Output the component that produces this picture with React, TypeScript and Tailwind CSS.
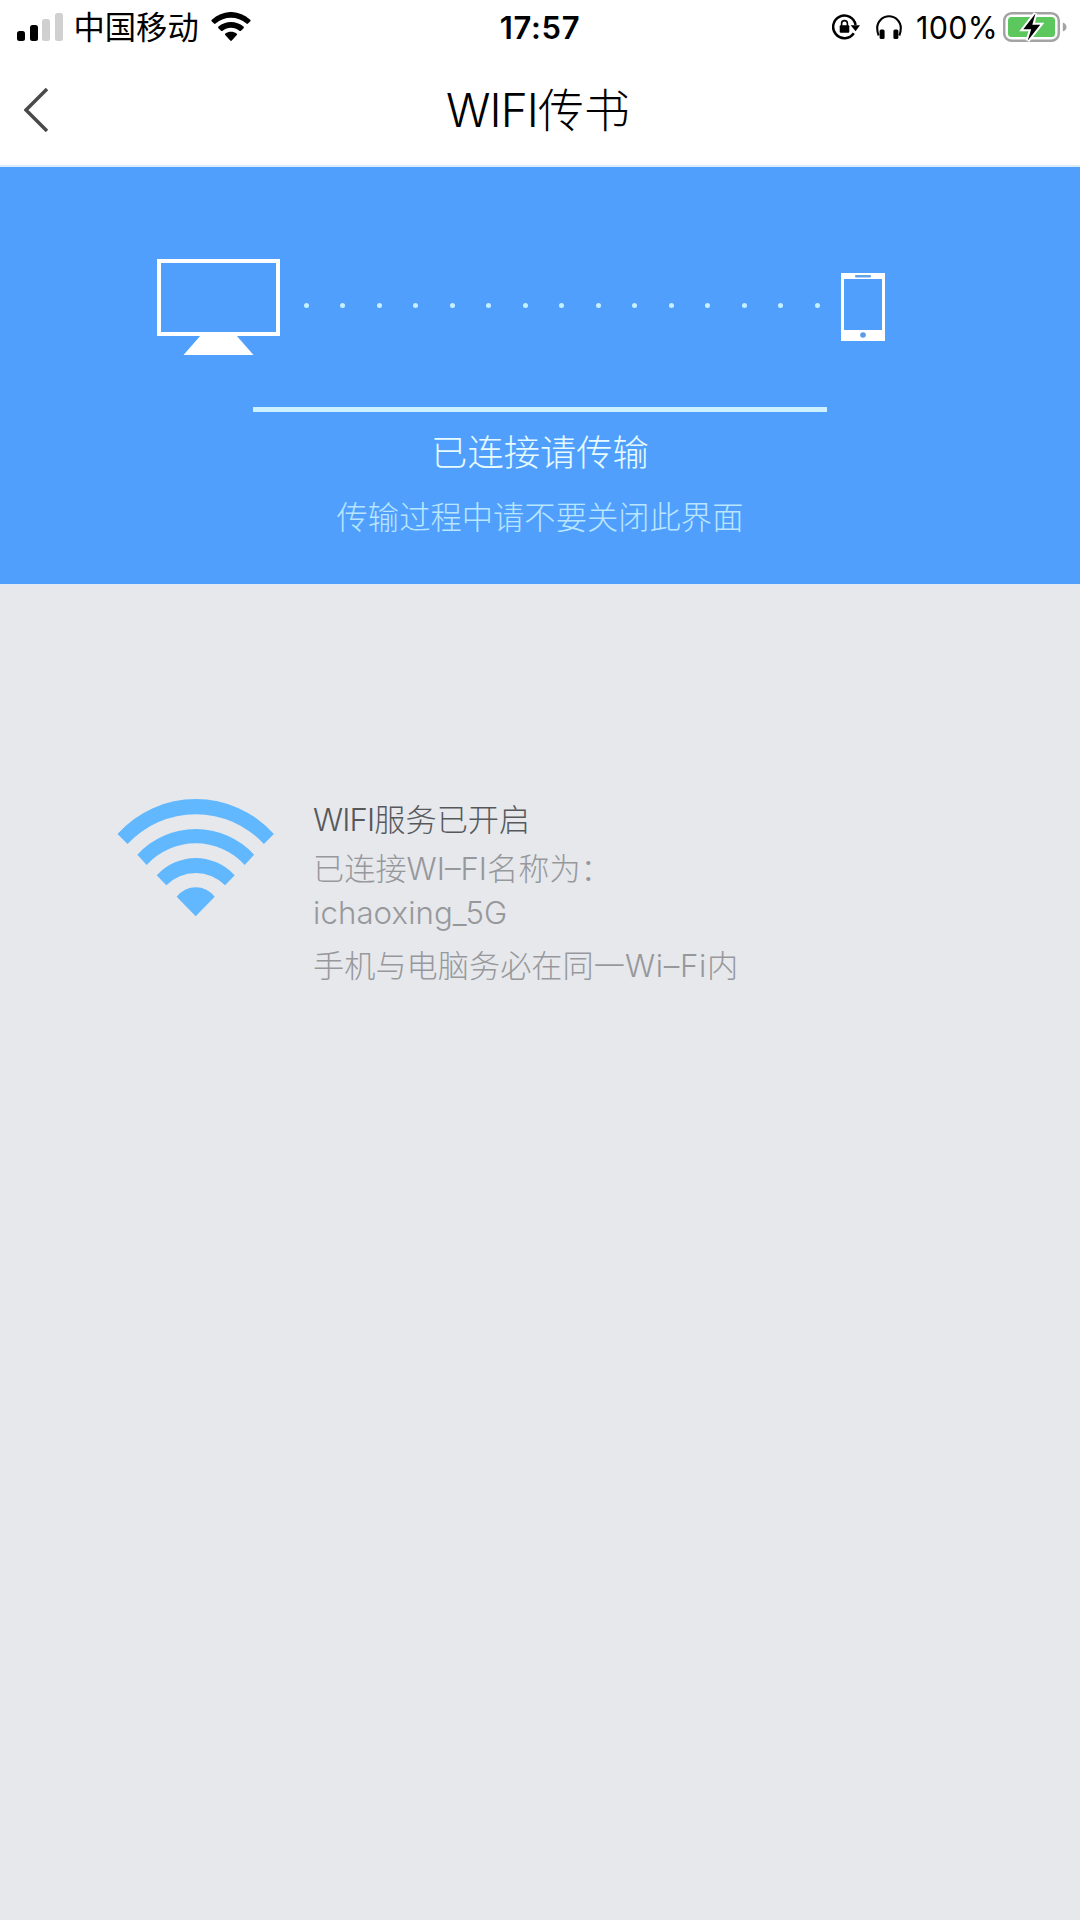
import React from 'react';

const DOT_COUNT = 15;

function SignalBars() {
  return (
    <div className="flex items-end gap-[4.5px] h-7">
      <div className="w-2 h-2.5 rounded-[2.5px] bg-black" />
      <div className="w-2 h-4 rounded-[2.5px] bg-black" />
      <div className="w-2 h-[22px] rounded-[2.5px] bg-[#d0d0d0]" />
      <div className="w-2 h-7 rounded-[2.5px] bg-[#d0d0d0]" />
    </div>
  );
}

function StatusWifi() {
  return (
    <svg width="40" height="30" viewBox="0 0 40 30" fill="black">
      <path d="M.6 9.2Q0 8.4.8 7.7C12-2.6 28-2.6 39.2 7.7Q40 8.4 39.4 9.2L37 11.6Q36.2 12.3 35.4 11.6C26.6 3.8 13.4 3.8 4.6 11.6Q3.8 12.3 3 11.6Z" />
      <path d="M7.4 16.2Q6.7 15.4 7.5 14.6C14.6 8.6 25.4 8.6 32.5 14.6Q33.3 15.4 32.6 16.2L30 18.7Q29.2 19.4 28.4 18.7C23.6 14.8 16.4 14.8 11.6 18.7Q10.8 19.4 10 18.7Z" />
      <path d="M14.2 23Q13.5 22.2 14.4 21.5C17.6 19 22.4 19 25.6 21.5Q26.5 22.2 25.8 23L20.8 28.5Q20 29.3 19.2 28.5Z" />
    </svg>
  );
}

function RotationLock() {
  return (
    <svg width="28" height="26" viewBox="0 0 28 26" fill="none" stroke="black">
      <path d="M21.8 19.2A11.3 11.3 0 1 1 23.6 11" strokeWidth="2.5" />
      <path d="M18.6 11.3H28L23.6 17.2Z" fill="black" stroke="none" />
      <rect x="7.7" y="11.2" width="9.6" height="7.6" rx="1" fill="black" stroke="none" />
      <path d="M9.6 12V9.5a2.9 2.9 0 0 1 5.8 0V12" strokeWidth="1.6" />
    </svg>
  );
}

function Headphones() {
  return (
    <svg width="26" height="25" viewBox="0 0 26 25" fill="none" stroke="black">
      <path d="M2.7 20.5C1.5 18 1.2 16 1.2 13A11.8 11.8 0 0 1 24.8 13C24.8 16 24.5 18 23.3 20.5" strokeWidth="2.1" />
      <rect x="3.6" y="14.5" width="5" height="9.5" rx="1.6" fill="black" stroke="none" />
      <rect x="17.4" y="14.5" width="5" height="9.5" rx="1.6" fill="black" stroke="none" />
    </svg>
  );
}

function Battery() {
  return (
    <svg width="64" height="32" viewBox="0 0 64 32">
      <rect x="1.2" y="2.2" width="54.6" height="27.6" rx="7.5" fill="white" stroke="#a3a3a5" strokeWidth="2.5" />
      <rect x="5" y="6" width="47" height="20" rx="3.5" fill="#5cc75c" />
      <path d="M59.8 11.5Q63.5 13 63.5 16T59.8 20.5Z" fill="#a3a3a5" />
      <path d="M32.5 2.5L20.3 18.2H28.2L24.6 29.7L37.2 13.8H29.3Z" fill="black" stroke="white" strokeWidth="4" paintOrder="stroke" />
    </svg>
  );
}

function StatusBar() {
  return (
    <div className="flex items-center justify-between h-[54px] pl-[17px] pr-[13px] text-black">
      <div className="flex items-center w-[400px]">
        <SignalBars />
        <span className="ml-[11px] mr-3 pt-1 text-[31.3px] leading-none">中国移动</span>
        <StatusWifi />
      </div>
      <span className="mr-1 text-[31px] font-semibold leading-none tracking-[0.7px]">17:57</span>
      <div className="flex items-center justify-end w-[400px]">
        <RotationLock />
        <span className="ml-4">
          <Headphones />
        </span>
        <span className="ml-3.5 mr-[5px] pt-0.5 text-[30.5px] leading-none tracking-[0.3px]">100%</span>
        <Battery />
      </div>
    </div>
  );
}

function NavBar() {
  return (
    <div className="grid grid-cols-3 items-center h-[111px] pl-6 pr-6">
      <svg width="26" height="44" viewBox="0 0 26 44" fill="none" stroke="#4a4a4a" strokeWidth="3.5">
        <path d="M23 1L2 22L23 43" />
      </svg>
      <h1 className="mr-1 text-center text-[46px] font-light leading-none text-black whitespace-nowrap">
        <span className="font-[270] tracking-[-0.9px]">WIFI</span>传书
      </h1>
    </div>
  );
}

function Computer() {
  return (
    <svg width="123" height="96" viewBox="0 0 123 96">
      <rect x="2" y="2" width="119" height="73" fill="none" stroke="white" strokeWidth="4" />
      <path d="M44 76H79L96.5 96H26.5Z" fill="white" />
    </svg>
  );
}

function Phone() {
  return (
    <svg width="44" height="68" viewBox="0 0 44 68">
      <path d="M0 0H44V68H0ZM3 6V57H41V6Z" fill="white" fillRule="evenodd" />
      <rect x="14" y="2" width="16" height="2.5" rx="1" fill="#62a4e8" />
      <circle cx="22" cy="62" r="2.8" fill="#5b9ce8" />
    </svg>
  );
}

function TransferPanel() {
  return (
    <div className="flex flex-col items-center h-[419px] pt-[92px] bg-[#519ffd] border-t-2 border-[#dcebfb]">
      <div className="flex items-start w-[728px] h-[148px] mr-[39px]">
        <Computer />
        <div className="flex flex-1 justify-between pl-6 pr-[21px] pt-[43.5px]">
          {Array.from({ length: DOT_COUNT }, (_, i) => (
            <div key={i} className="w-[5px] h-[5px] rounded-full bg-[#c5f0ff]" />
          ))}
        </div>
        <div className="pt-[14px]">
          <Phone />
        </div>
      </div>
      <div className="w-[574px] h-[5px] bg-[#cdf1ff]" />
      <p className="mt-[23px] text-[36.3px] font-light leading-[36px] text-[#e6fbff]">已连接请传输</p>
      <p className="mt-8 text-[31.3px] font-light leading-[31px] text-[#b9e6ff]">传输过程中请不要关闭此界面</p>
    </div>
  );
}

function WifiSymbol() {
  return (
    <svg width="158" height="118" viewBox="0 0 158 118" fill="#62b8ff">
      <path d="M.5 35A104.9 104.9 0 0 1 156.9 35L146.9 45A93 93 0 0 0 10.5 45Z" />
      <path d="M20.3 55.7A79.2 79.2 0 0 1 137.1 55.7L127.7 66A66.2 66.2 0 0 0 29.7 66Z" />
      <path d="M39.7 76.3A52.6 52.6 0 0 1 117.7 76.3L108.1 86.3A41.3 41.3 0 0 0 49.3 86.3Z" />
      <path d="M59.7 97.7A23.9 23.9 0 0 1 97.7 97.7L78.7 117.3Z" />
    </svg>
  );
}

function ServiceInfo() {
  return (
    <div className="flex pt-[214px] pl-[117px]">
      <WifiSymbol />
      <div className="ml-[38px] text-[31.2px] font-light text-[#97989c] whitespace-nowrap">
        <p className="h-[49px] leading-[42px] text-[#57585c]">
          <span className="font-[270] tracking-[-0.9px]">WIFI</span>服务已开启
        </p>
        <p className="h-[44px] leading-[42px]">
          已连接<span className="font-[270]">WI–FI</span>名称为：
        </p>
        <p className="h-[53px] leading-[42px] font-[270] tracking-[0.1px]">ichaoxing_5G</p>
        <p className="h-[49px] leading-[42px]">
          手机与电脑务必在同一<span className="font-[270] tracking-[0.7px]">Wi–Fi</span>内
        </p>
      </div>
    </div>
  );
}

export default function App() {
  return (
    <div className="w-[1080px] h-[1920px] overflow-hidden bg-white font-['Inter','Noto_Sans_CJK_SC',sans-serif]">
      <StatusBar />
      <NavBar />
      <TransferPanel />
      <div className="h-[1336px] bg-[#e6e8ec] border-t border-[#dde9f5]">
        <ServiceInfo />
      </div>
    </div>
  );
}
